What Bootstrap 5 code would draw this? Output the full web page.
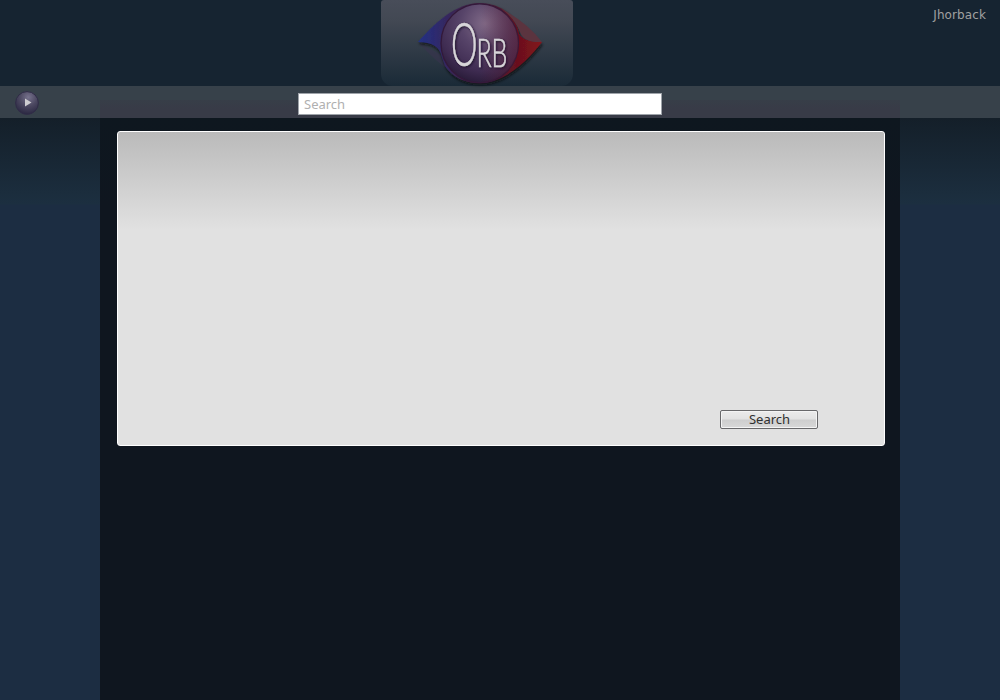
<!DOCTYPE html>
<html lang="en">
<head>
<meta charset="utf-8">
<meta name="viewport" content="width=device-width, initial-scale=1">
<title>Orb</title>
<link href="https://cdn.jsdelivr.net/npm/bootstrap@5.3.0/dist/css/bootstrap.min.css" rel="stylesheet">
<style>
body{font:12px/16px "DejaVu Sans",Verdana,sans-serif;background:#1c2d42;min-height:700px;height:100vh;overflow:hidden}
.orb-top{height:86px;background:#162431}
.orb-brand{width:192px;height:86px;margin-left:381px;border-radius:3px 3px 12px 12px;background:linear-gradient(#484d59,#424853 25%,#1a2a37)}
.orb-brand svg{display:block;overflow:visible}
.orb-user{color:#a0a0a0;margin:7px 14px 0 0;letter-spacing:.1px}
.orb-bar{height:32px;background:#37414a}
.orb-bar::before{content:"";position:absolute;left:100px;right:100px;top:14px;bottom:0;background:linear-gradient(#373e48,#383b47 50%)}
.orb-play{width:24px;height:24px;margin:5px 0 0 15px}
.orb-play svg{display:block}
.orb-field{width:364px;height:22px;margin:7px 0 0 259px;padding:0 5px 1px;border:1px solid #9ea3a9;border-radius:0;font:13px/18px "Noto Sans",sans-serif;color:#333}
.orb-field::placeholder{color:#b0b0b0;opacity:1}
.orb-main{background:linear-gradient(#141f29,#1c2f40 86px,#1c2d42 87px)}
.orb-column{width:800px;background:linear-gradient(#0e171f,#0f161f 90px);padding:13px 15px 0 17px}
.orb-panel{height:315px;border:1px solid #fff;border-radius:3px;background:linear-gradient(#bababa,#e1e1e1 98px);padding:0 66px 16px 0}
.orb-search{width:98px;height:19px;padding:0 0 0 1px;border:1px solid #68686a;border-radius:2px;font:13px/17px "Noto Sans",sans-serif;color:#303030;background:linear-gradient(#ebebeb 0,#e2e2e2 48%,#cecece 52%,#d8d8d8);box-shadow:inset 0 0 0 1px #f4f4f4}
</style>
</head>
<body class="d-flex flex-column">
<header class="orb-top d-flex justify-content-between align-items-start position-relative z-1">
  <a class="orb-brand d-block" href="#" aria-label="Orb home">
    <svg width="192" height="92" viewBox="381 0 192 92">
      <defs>
        <linearGradient id="lid" gradientUnits="userSpaceOnUse" x1="418" y1="0" x2="543" y2="0"><stop stop-color="#233184"/><stop offset=".14" stop-color="#2d2b6f"/><stop offset=".3" stop-color="#3b2553"/><stop offset=".65" stop-color="#4c1830"/><stop offset=".8" stop-color="#6b101d"/><stop offset="1" stop-color="#84151b"/></linearGradient>
        <radialGradient id="ball" cx=".57" cy=".25" r=".75"><stop stop-color="#816b88"/><stop offset=".42" stop-color="#574469"/><stop offset=".8" stop-color="#3f2c52"/><stop offset="1" stop-color="#2b1d3b"/></radialGradient>
        <linearGradient id="red"><stop offset=".5" stop-color="#601c30" stop-opacity="0"/><stop offset="1" stop-color="#601c30" stop-opacity=".5"/></linearGradient>
        <filter id="soft" x="-20%" y="-20%" width="150%" height="150%"><feDropShadow dx="1" dy="2" stdDeviation="1.5" flood-color="#080b10" flood-opacity=".85"/></filter>
        <filter id="ink" x="-20%" y="-20%" width="150%" height="150%"><feDropShadow dx="1" dy="1" stdDeviation=".8" flood-color="#170f20" flood-opacity=".9"/></filter>
      </defs>
      <path d="M418 42Q434 60 456 76L445 57Z" fill="#38334f" opacity=".6"/>
      <path d="M418 42C434 24 455 3 480 3Q496 3 508 13Q518 25 519 34Q524 42 542 42C530 58 506 83 480 83Q456 83 445 66L442 57Q439 42 418 42Z" fill="url(#lid)" filter="url(#soft)"/>
      <path d="M500 8Q527 22 542 42Q524 43 520 32Q514 17 500 8Z" fill="#5b343f"/>
      <ellipse cx="479.7" cy="43.3" rx="38.7" ry="39.5" fill="url(#ball)" stroke="#33193a" stroke-width="1.3"/>
      <ellipse cx="479.7" cy="43.3" rx="38.7" ry="39.5" fill="url(#red)"/>
      <g filter="url(#ink)" fill="#d8d6da" font-family="Lato" font-weight="300" stroke="#d8d6da" stroke-width=".5">
        <text transform="translate(451 66.3) scale(.54 1)" font-size="62">O</text>
        <text transform="translate(476.5 66.5) scale(.63 1)" font-size="39.5">RB</text>
      </g>
    </svg>
  </a>
  <span class="orb-user">Jhorback</span>
</header>
<nav class="orb-bar d-flex align-items-start position-relative">
  <a class="orb-play position-relative" href="#" aria-label="Open">
    <svg width="24" height="24" viewBox="0 0 24 24"><defs><radialGradient id="knob" cx=".56" cy=".25" r=".75"><stop stop-color="#77728d"/><stop offset=".5" stop-color="#4c4861"/><stop offset="1" stop-color="#2b2842"/></radialGradient></defs><circle cx="12" cy="12" r="11.4" fill="url(#knob)" stroke="#302c47" stroke-width="1"/><path d="M10 7.5v8l6.5-4z" fill="#cfcdd1"/></svg>
  </a>
  <input class="form-control orb-field position-relative" type="text" placeholder="Search" aria-label="Search">
</nav>
<main class="orb-main flex-grow-1 d-flex justify-content-center">
  <div class="orb-column">
    <section class="orb-panel d-flex justify-content-end align-items-end">
      <button class="btn orb-search" type="button">Search</button>
    </section>
  </div>
</main>
<script src="https://cdn.jsdelivr.net/npm/bootstrap@5.3.0/dist/js/bootstrap.bundle.min.js"></script>
</body>
</html>
